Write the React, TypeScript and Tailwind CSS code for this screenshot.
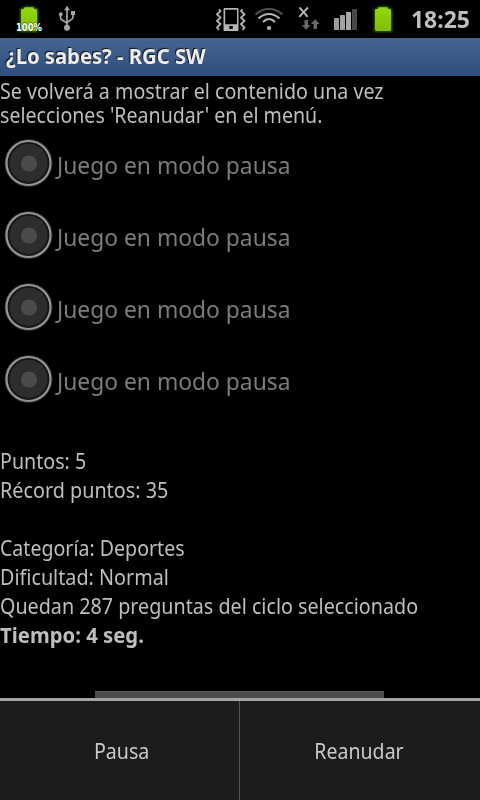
import type { ReactNode } from 'react';

function Line({ children, className = 'origin-left scale-x-[0.936]' }: { children: ReactNode; className?: string }) {
  return <div className={`whitespace-pre ${className}`}>{children}</div>;
}

function Battery({ charging = false }: { charging?: boolean }) {
  return (
    <svg width="28" height="32" viewBox="0 0 28 32" className="block overflow-visible">
      <defs>
        <linearGradient id="green" x1="0" y1="0" x2="0" y2="1">
          <stop offset="0" stopColor="#92d80c" />
          <stop offset="1" stopColor="#80bd08" />
        </linearGradient>
        <filter id="glow" x="-30%" y="-30%" width="160%" height="160%">
          <feGaussianBlur stdDeviation="1" />
        </filter>
      </defs>
      <path d="M9.500 3.500h9v2H22v21.500H6v-21.500h3.500z" fill="none" stroke="#3d7005" strokeWidth="2" filter="url(#glow)" />
      <path d="M10 3.200h8q.8 0 1 1.800h1.500q1.500 0 1.500 1.500v18.500q0 2-1.500 2h-13Q6 27 6 25V6.500Q6 5 7.500 5H9q.2-1.800 1-1.800z" fill="url(#green)" />
      {charging && (
        <text x="14" y="27" textAnchor="middle" fontFamily="DejaVu Sans Condensed, DejaVu Sans" fontSize="11" fontWeight="bold" fill="#fff" stroke="#223f05" strokeWidth="0.800" paintOrder="stroke" textLength="26" lengthAdjust="spacingAndGlyphs">100%</text>
      )}
    </svg>
  );
}

function StatusBar() {
  return (
    <div className="flex h-[38px] items-start bg-black">
      <div className="ml-[15px] mt-1"><Battery charging /></div>
      <svg width="20" height="28" viewBox="0 0 20 28" className="ml-[15px] mt-[5px] block" fill="none" stroke="#a6a6a6" strokeWidth="1.700">
        <path d="M9 4v18M2.500 9v3.500q0 2 2 2.800L9 18M15 8v4q0 2-2 2.800L9 17.500" />
        <path d="M9 0.800 6 5.300h6z" fill="#a6a6a6" stroke="none" />
        <circle cx="9" cy="22.800" r="3" fill="#a6a6a6" stroke="none" />
        <circle cx="2.800" cy="9.200" r="1.900" fill="#a6a6a6" stroke="none" />
        <path d="M13 6h4v4h-4z" fill="#a6a6a6" stroke="none" />
      </svg>
      <svg width="30" height="26" viewBox="0 0 30 26" className="ml-[138px] mt-[6px] block" fill="none" stroke="#b4b4b4" strokeWidth="1.800">
        <path d="M3 3.300 4.500 5 1 8.500 4.500 11.500 1 15 4.500 18 1 21.500 3 24M26.500 3.300 25 5l3.500 3.500-3.500 3 3.500 3.500-3.500 3 3.500 3.500-2 2.500" />
        <path d="M8.500 2h13q1 0 1 1v21q0 1-1 1h-13q-1 0-1-1V3q0-1 1-1zM9.200 3.700v14.500H21V3.700z" fill="#b4b4b4" fillRule="evenodd" stroke="none" />
        <path d="M13.300 20h3.500v3h-3.500z" fill="#000" stroke="none" />
      </svg>
      <svg width="30" height="26" viewBox="0 0 30 26" className="ml-[8px] mt-[6px] block" fill="none" stroke="#b4b4b4" strokeWidth="2.200">
        <path d="M1.500 8.500Q7.500 3 15 3t13.500 5.500" stroke="#505050" />
        <path d="M4.500 12.500Q9.500 8 15 8t10.500 4.500M9 16Q12 13 15 13t6 3" />
        <circle cx="15" cy="22" r="2.100" fill="#b4b4b4" stroke="none" />
      </svg>
      <svg width="22" height="26" viewBox="0 0 22 26" className="ml-[14px] mt-[5px] block">
        <path d="M1.500 2.500 9.700 11.800M10 2.500 1.200 11.800" stroke="#b4b4b4" strokeWidth="1.900" />
        <path d="M6.500 15h3.500v5h2.700L8.200 24.700 3.700 20h2.800zM15.500 24h3.500v-5h2.700l-4.500-4.700L12.700 19h2.800z" fill="#686868" />
      </svg>
      <svg width="24" height="22" viewBox="0 0 24 22" className="ml-[14px] mt-[9px] block">
        <rect x="0" y="9" width="5" height="12" rx="0.500" fill="#9c9c9c" />
        <rect x="6" y="6" width="5" height="15" rx="0.500" fill="#a2a2a2" />
        <rect x="12" y="3" width="5" height="18" rx="0.500" fill="#aaa" />
        <rect x="18" y="0" width="5" height="21" rx="0.500" fill="#484848" />
      </svg>
      <div className="ml-[11px] mt-1"><Battery /></div>
      <div className="ml-[14px] mt-[3px] origin-left scale-x-[0.955] whitespace-nowrap text-[24px] font-bold leading-[32px] text-[#bebebe]">18:25</div>
    </div>
  );
}

function Radio() {
  return (
    <svg width="57" height="60" viewBox="0 0 57 60" className="block shrink-0">
      <circle cx="28.500" cy="30" r="23.200" fill="none" stroke="#292929" strokeWidth="1.500" />
      <circle cx="28.500" cy="30" r="22" fill="#161616" stroke="#949494" strokeWidth="2.200" />
      <circle cx="28.500" cy="30" r="19" fill="#2d2d2d" />
      <circle cx="29" cy="30.500" r="8" fill="#4b4b4b" />
    </svg>
  );
}

export default function App() {
  return (
    <div className="flex h-[800px] w-[480px] flex-col overflow-hidden bg-black font-['Noto_Sans',sans-serif] text-[21px] text-[#bebebe]">
      <StatusBar />
      <div className="h-[38px] bg-linear-to-b from-[#466493] to-[#2e4f7b] pl-[6px] text-[21px] font-bold leading-[37px] text-[#ededed] [text-shadow:-1px_-1px_1px_#111]">
        <Line className="origin-left scale-x-[0.963]">¿Lo sabes? - RGC SW</Line>
      </div>
      <div className="pb-px pt-[3px] leading-[24px]">
        <Line>Se volverá a mostrar el contenido una vez</Line>
        <Line className="origin-left scale-x-[0.933]">selecciones 'Reanudar' en el menú.</Line>
      </div>
      <div className="mt-[5px]">
        {[0, 1, 2, 3].map((i) => (
          <div key={i} className="flex h-[72px] items-start text-[24px] leading-[63px] text-[#7c7c7c]">
            <Radio />
            <Line className="w-fit origin-left scale-x-[0.951]">Juego en modo pausa</Line>
          </div>
        ))}
      </div>
      <div className="mt-[26px] leading-[29px]">
        <Line>Puntos: 5</Line>
        <Line className="origin-left scale-x-[0.942]">Récord puntos: 35</Line>
        <div className="h-[29px]" />
        <Line className="origin-left scale-x-[0.932]">Categoría: Deportes</Line>
        <Line className="origin-left scale-x-[0.941]">Dificultad: Normal</Line>
        <Line className="origin-left scale-x-[0.939]">Quedan 287 preguntas del ciclo seleccionado</Line>
        <Line className="origin-left scale-x-[0.966] font-bold">Tiempo: 4 seg.</Line>
      </div>
      <div className="ml-[95px] mt-auto h-[7px] w-[289px] border-t border-[#5c5c5c] bg-[#4b4b4b]" />
      <div className="flex h-[102px] shrink-0 border-t-[3px] border-[#a4a4a4] bg-[#1c1c1c] leading-[101px] text-[#cacaca]">
        <div className="flex w-[240px] justify-center border-r border-[#555] pl-1">
          <Line className="scale-x-[0.935]">Pausa</Line>
        </div>
        <div className="flex flex-1 justify-center pr-[2px]">
          <Line className="scale-x-[0.93]">Reanudar</Line>
        </div>
      </div>
    </div>
  );
}
